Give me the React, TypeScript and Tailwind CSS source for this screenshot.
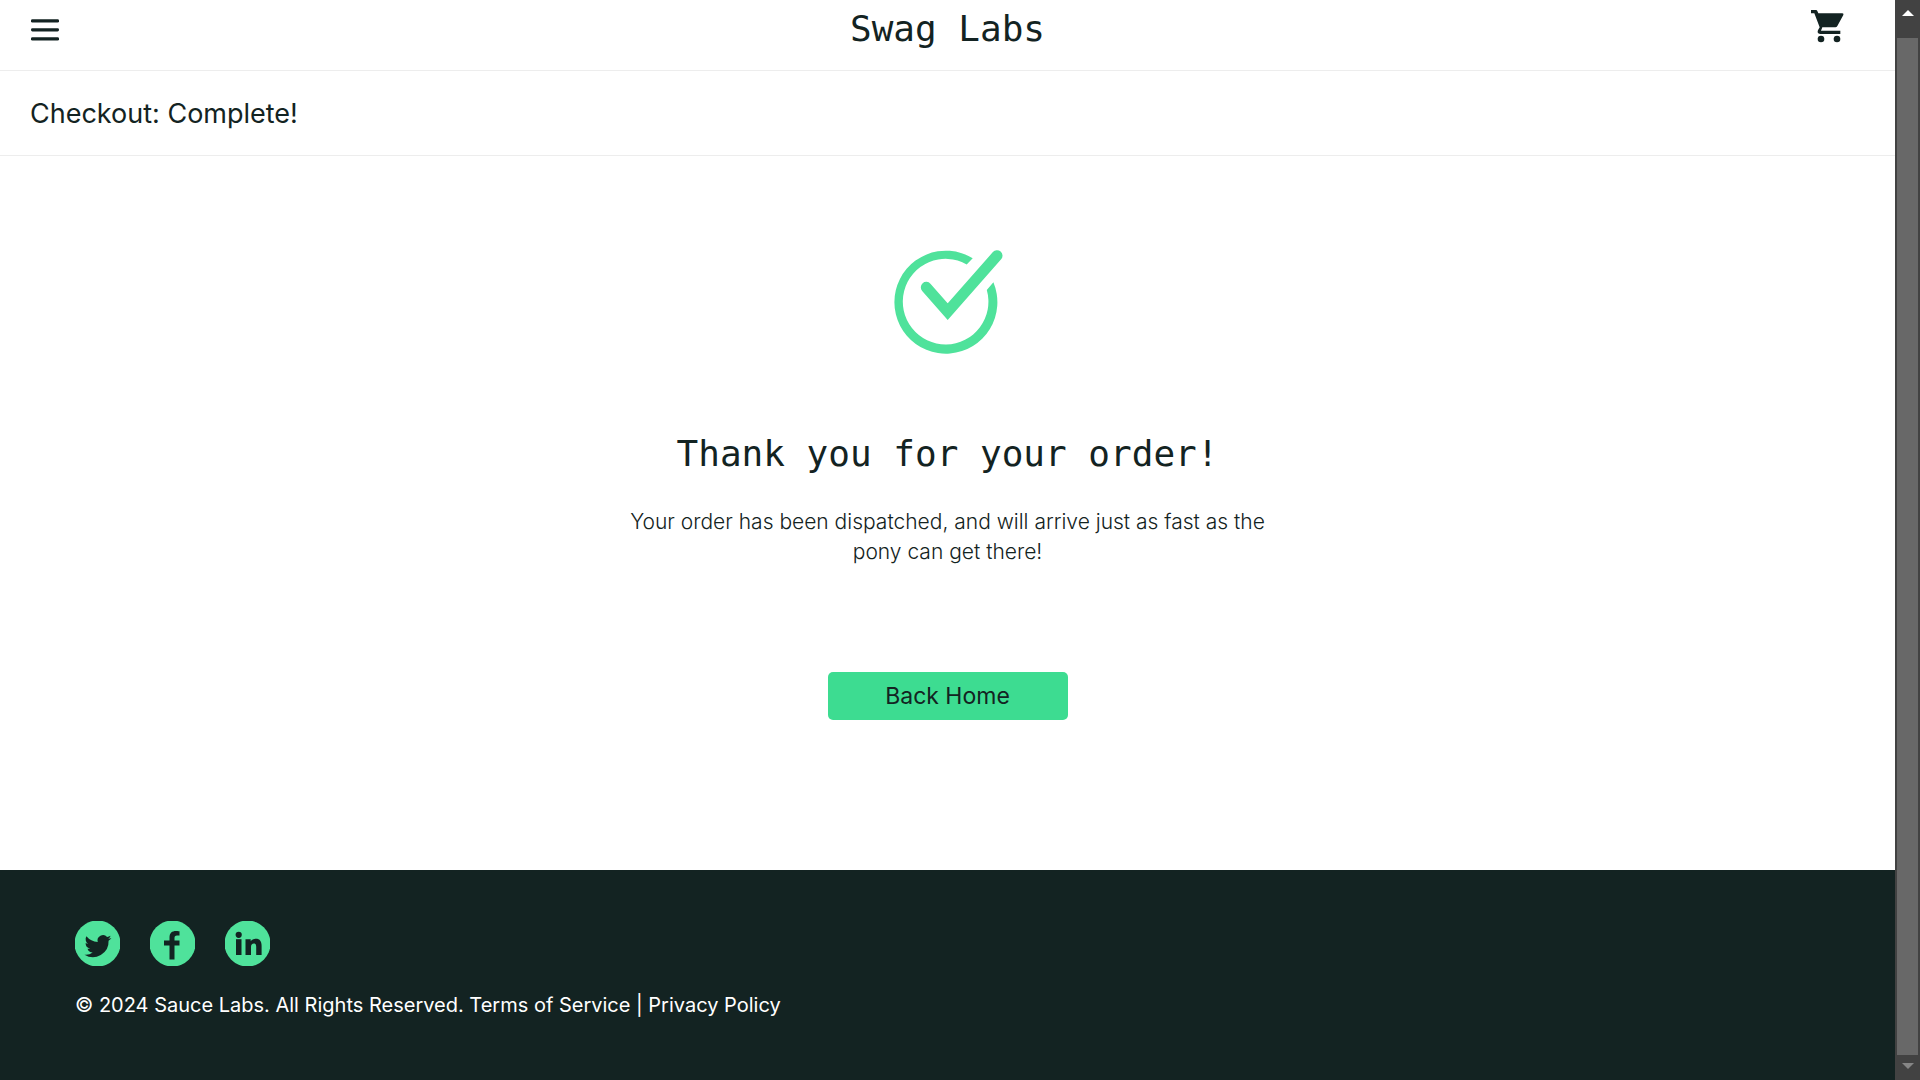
import React from 'react';

function MenuIcon() {
  return (
    <svg viewBox="0 0 28 22" className="h-[22px] w-7" fill="currentColor" aria-hidden="true">
      <rect x="0" y="0.2" width="28" height="3.4" rx="1.4" />
      <rect x="0" y="9.3" width="28" height="3.2" rx="1.4" />
      <rect x="0" y="18.2" width="28" height="3.4" rx="1.4" />
    </svg>
  );
}

function CartIcon() {
  return (
    <svg viewBox="97 30 99 99" className="size-[33px]" fill="currentColor" aria-hidden="true">
      <path d="M97 30H112Q115 30 116 33L119 40H191Q196 40 194 45L176 78Q174 82 170 82H131L127 92H185V102H126Q116 102 117 94Q118 90 123 82L107 40H97Z" />
      <circle cx="127" cy="117" r="10" />
      <circle cx="175" cy="117" r="10" />
    </svg>
  );
}

function OrderCompleteIcon() {
  return (
    <svg viewBox="0 0 111 106" className="h-[106px] w-[111px] text-[#4fe29b]" role="img" aria-label="Order complete">
      <path
        fill="currentColor"
        d="M80.7 9.2A51.5 51.5 0 1 0 101.4 33.3L94.8 41A42.8 42.8 0 1 1 74.7 15.4Z"
      />
      <path
        fill="none"
        stroke="currentColor"
        strokeWidth="11"
        strokeLinecap="round"
        strokeMiterlimit="10"
        d="M34.3 38.3L55.7 62.7L105 6.7"
      />
    </svg>
  );
}

const socials = [
  {
    name: 'Twitter',
    glyph: (
      <path
        transform="translate(9.5 14) scale(1.12)"
        d="M24 2.6a10 10 0 0 1-2.8.8A5 5 0 0 0 23.3.6a10 10 0 0 1-3.1 1.2A4.9 4.9 0 0 0 11.8 6.3 14 14 0 0 1 1.7 1.2a4.9 4.9 0 0 0 1.5 6.6A4.9 4.9 0 0 1 1 7.2a4.9 4.9 0 0 0 3.9 4.9 5 5 0 0 1-2.2.1 4.9 4.9 0 0 0 4.6 3.4A9.9 9.9 0 0 1 0 17.6 14 14 0 0 0 21.5 5.2 10 10 0 0 0 24 2.6Z"
      />
    ),
  },
  {
    name: 'Facebook',
    glyph: (
      <path d="M19.5 38.5V24.5H14V19.5H19.5V16.5C19.5 12 22 10 26 10C28 10 29.500 10.3 29.5 10.3V14.5H27C25 14.5 24.5 15.5 24.5 17V19.5H29.5V24.5H24.5V38.5Z" />
    ),
  },
  {
    name: 'LinkedIn',
    glyph: (
      <>
        <circle cx="13.7" cy="13.8" r="3.1" />
        <path d="M11 18.2H16.5V34H11Z" />
        <path d="M20.5 18.2H25.7V20.3C26.7 18.7 28.5 17.8 30.8 17.8C35 17.8 36.6 20.5 36.6 25V34H31.2V25.8C31.2 23.5 30.5 22.4 28.9 22.4C27 22.4 26 23.7 26 25.9V34H20.5Z" />
      </>
    ),
  },
];

function ScrollBar() {
  return (
    <aside aria-hidden="true" className="flex w-[25px] shrink-0 flex-col bg-[#424242] px-0.5">
      <div className="flex h-[38px] items-start justify-center pt-2.5">
        <svg viewBox="0 0 12 6" className="h-1.5 w-3 text-white" fill="currentColor">
          <path d="M6 0L12 6H0Z" />
        </svg>
      </div>
      <div className="grow bg-[#686868]" />
      <div className="flex h-[25px] items-start justify-center pt-2">
        <svg viewBox="0 0 12 6" className="h-1.5 w-3 text-[#868686]" fill="currentColor">
          <path d="M0 0H12L6 6Z" />
        </svg>
      </div>
    </aside>
  );
}

export default function App() {
  return (
    <div className="flex min-h-screen bg-white font-['Inter',sans-serif] text-[#132322]">
      <div className="flex grow flex-col">
        <header>
          <div className="grid h-[71px] grid-cols-3 items-start border-b border-[#ededed] px-[31px]">
            <button type="button" aria-label="Open menu" className="mt-[19px] w-7">
              <MenuIcon />
            </button>
            <div className="text-center font-['DejaVu_Sans_Mono',monospace] text-[36px] leading-[58px]">
              Swag Labs
            </div>
            <a href="#cart" aria-label="Shopping cart" className="mt-2.5 mr-5 justify-self-end">
              <CartIcon />
            </a>
          </div>
          <div className="flex h-[85px] items-center border-b border-[#ededed] px-[30px] pt-0.5">
            <h1 className="text-[27px] leading-8">Checkout: Complete!</h1>
          </div>
        </header>

        <main className="flex grow flex-col items-center pt-[93px]">
          <OrderCompleteIcon />
          <h2 className="mt-[75px] font-['DejaVu_Sans_Mono',monospace] text-[36px] leading-[48px]">
            Thank you for your order!
          </h2>
          <p className="mt-[29px] w-[660px] text-center text-[21px] leading-[30px] font-light">
            Your order has been dispatched, and will arrive just as fast as the pony can get there!
          </p>
          <button
            type="button"
            className="mt-[105px] h-12 w-60 rounded-[5px] bg-[#3ddc91] text-[23px] leading-7"
          >
            Back Home
          </button>
        </main>

        <footer className="h-[210px] bg-[#132322] px-[75px] pt-[51px] text-white">
          <ul className="flex gap-[30px]">
            {socials.map(({ name, glyph }) => (
              <li key={name}>
                <a href="#social" aria-label={name} className="block">
                  <svg viewBox="0 0 45 45" className="size-[45px]" aria-hidden="true">
                    <circle cx="22.5" cy="22.5" r="23" fill="#4fe29b" />
                    <g fill="#132322">{glyph}</g>
                  </svg>
                </a>
              </li>
            ))}
          </ul>
          <p className="mt-6 text-xl leading-[30px]">
            © 2024 Sauce Labs. All Rights Reserved. Terms of Service | Privacy Policy
          </p>
        </footer>
      </div>
      <ScrollBar />
    </div>
  );
}
